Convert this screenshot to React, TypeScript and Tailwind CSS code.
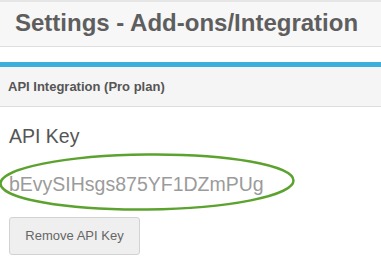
export default function App() {
  return (
    <div className="w-[381px] h-[266px] overflow-hidden bg-white font-['Liberation_Sans',Arial,sans-serif]">
      <div className="h-[47px] bg-[#f7f7f7] border-t-2 border-[#e6e6e6] border-b border-b-[#dedede] pl-[15px] flex items-center">
        <h1 className="text-[24px] font-bold text-[#5e5e5e] leading-none pb-[3px]">Settings - Add-ons/Integration</h1>
      </div>
      <div className="mt-[15px] border-t-[5px] border-[#3eaedc]">
        <div className="h-[40px] bg-[#f5f5f5] border-b border-[#dddddd] pl-[8px] flex items-center">
          <span className="text-[13px] font-bold text-[#555]">API Integration (Pro plan)</span>
        </div>
        <div className="pl-[9px] pt-[17px]">
          <div className="text-[19.5px] text-[#555] leading-[24px]">API Key</div>
          <div className="relative mt-[19px] h-[36px] flex items-center">
            <span className="text-[19.5px] text-[#9b9b9b] leading-none">bEvySIHsgs875YF1DZmPUg</span>
            <svg className="absolute left-[-11px] top-[-14px]" width="300" height="60" viewBox="0 0 300 60">
              <ellipse cx="149" cy="29" rx="146.5" ry="27.5" fill="none" stroke="#5ca22e" strokeWidth="2.5" transform="rotate(-0.6 149 29)" />
            </svg>
          </div>
          <button className="mt-[14px] h-[38px] w-[131px] bg-[#efefef] border border-[#d2d2d2] rounded-[3px] text-[13px] text-[#666]">
            Remove API Key
          </button>
        </div>
      </div>
    </div>
  );
}
